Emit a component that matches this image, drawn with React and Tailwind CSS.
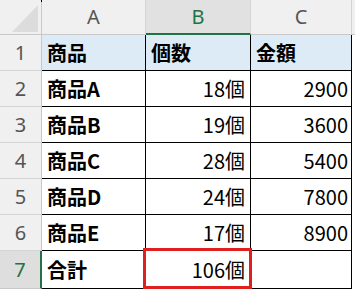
const ROWS = [
  { n: 1, name: "商品", qty: "個数", amount: "金額", head: true },
  { n: 2, name: "商品A", qty: "18個", amount: "2900" },
  { n: 3, name: "商品B", qty: "19個", amount: "3600" },
  { n: 4, name: "商品C", qty: "28個", amount: "5400" },
  { n: 5, name: "商品D", qty: "24個", amount: "7800" },
  { n: 6, name: "商品E", qty: "17個", amount: "8900" },
  { n: 7, name: "合計", qty: "106個", amount: "", active: true },
];

const cellFont = { fontFamily: '"Noto Sans CJK JP", "Noto Sans", sans-serif' };

function ColHeader({ label, active, className = "" }) {
  return (
    <div
      className={
        "flex items-center justify-center border-r border-[#d4d4d4] text-[20px] " +
        (active
          ? "bg-[#e1e1e1] text-[#217346] border-b-2 border-b-[#217346]"
          : "bg-[#f0f0f0] text-[#555] border-b border-b-[#c8c8c8]") +
        " " +
        className
      }
      style={{ fontFamily: '"Noto Sans", sans-serif' }}
    >
      {label}
    </div>
  );
}

export default function App() {
  return (
    <div className="relative w-[355px] h-[291px] overflow-hidden bg-white" style={cellFont}>
      <div className="flex h-[35px]">
        <div className="relative w-[42px] shrink-0 bg-[#f0f0f0] border-r border-b border-[#c8c8c8]">
          <svg className="absolute left-[12px] top-[5px]" width="26" height="27" viewBox="0 0 26 27">
            <polygon points="26,0 26,27 0,27" fill="#dcdcdc" />
          </svg>
          <div className="absolute right-[-1px] top-0 w-px h-[2px] bg-black" />
        </div>
        <ColHeader label="A" className="w-[104px] shrink-0" />
        <ColHeader label="B" active className="w-[105px] shrink-0" />
        <ColHeader label="C" className="w-[101px] shrink-0" />
        <div className="flex-1 bg-[#f0f0f0] border-b border-[#c8c8c8]" />
      </div>

      {ROWS.map((r) => (
        <div key={r.n} className={"flex " + (r.n === 7 ? "h-[38px]" : "h-[36px]")}>
          <div
            className={
              "w-[42px] shrink-0 flex items-center justify-center text-[20px] border-r " +
              (r.active
                ? "bg-[#dedede] text-[#217346] border-r-2 border-r-[#217346] border-b border-b-[#c8c8c8]"
                : "bg-[#f0f0f0] text-[#555] border-r-[#c8c8c8] border-b border-b-[#d4d4d4]")
            }
            style={{ fontFamily: '"Noto Sans", sans-serif' }}
          >
            {r.n}
          </div>
          <div
            className={
              "w-[104px] shrink-0 flex items-center pl-[5px] text-[20px] font-bold text-black border-r border-b border-black " +
              (r.head ? "bg-[#ddebf7]" : "")
            }
          >
            {r.name}
          </div>
          <div
            className={
              "w-[105px] shrink-0 flex items-center text-[20px] text-black border-r border-b border-black " +
              (r.head ? "bg-[#ddebf7] font-bold pl-[5px]" : "justify-end pr-[5px]")
            }
          >
            {r.qty}
          </div>
          <div
            className={
              "w-[101px] shrink-0 flex items-center text-[20px] text-black border-r border-b border-black " +
              (r.head ? "bg-[#ddebf7] font-bold pl-[5px]" : "justify-end pr-[3px]")
            }
          >
            {r.amount}
          </div>
          <div className="flex-1" />
        </div>
      ))}

      <div className="absolute left-[143px] top-[248px] w-[109px] h-[41px] border-[3px] border-[#e0201f]" />
    </div>
  );
}
